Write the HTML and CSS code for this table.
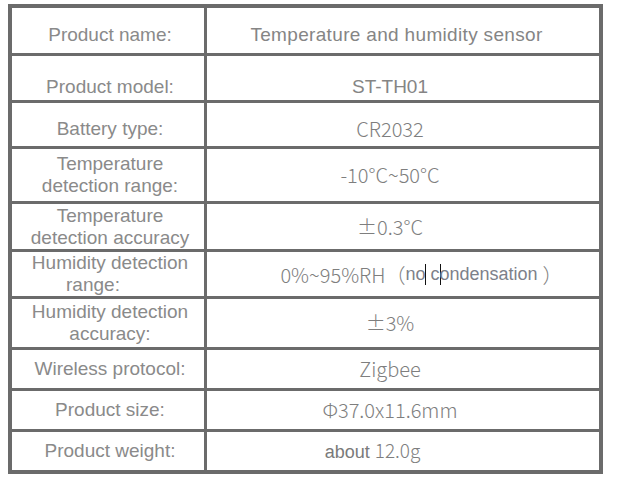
FILE: index.html
```html
<!DOCTYPE html>
<html>
<head>
<meta charset="utf-8">
<link rel="stylesheet" href="styles.css">
</head>
<body>
<div class="spec">
  <div class="row h45 low1">
    <div class="k">Product name:</div>
    <div class="v latin name">Temperature and humidity sensor</div>
  </div>
  <div class="row h44 low2">
    <div class="k">Product model:</div>
    <div class="v latin">ST-TH01</div>
  </div>
  <div class="row h43 low1">
    <div class="k">Battery type:</div>
    <div class="v">CR2032</div>
  </div>
  <div class="row h52">
    <div class="k"><span>Temperature<br>detection range:</span></div>
    <div class="v">-10°C~50°C</div>
  </div>
  <div class="row h45">
    <div class="k"><span>Temperature<br>detection accuracy</span></div>
    <div class="v">±0.3°C</div>
  </div>
  <div class="row h44">
    <div class="k"><span>Humidity detection<br><span class="offl">range:</span></span></div>
    <div class="v hum"><span>0%~95%RH（<span class="note">no<span class="caret"></span> c<span class="caret"></span>ondensation </span>）</span></div>
  </div>
  <div class="row h48">
    <div class="k"><span>Humidity detection<br>accuracy:</span></div>
    <div class="v">±3%</div>
  </div>
  <div class="row h38">
    <div class="k">Wireless protocol:</div>
    <div class="v">Zigbee</div>
  </div>
  <div class="row h38">
    <div class="k">Product size:</div>
    <div class="v">Φ37.0x11.6mm</div>
  </div>
  <div class="row h38">
    <div class="k">Product weight:</div>
    <div class="v weight"><span><span class="about">about </span>12.0g</span></div>
  </div>
</div>
</body>
</html>
```
FILE: styles.css
```css
html, body {
  background: #ffffff;
}
body {
  margin: 4px 0 0 8px;
}
.spec {
  width: 587px;
  border: 4px solid #6b6b6b;
  display: flex;
  flex-direction: column;
}
.row {
  display: flex;
  border-top: 3px solid #6b6b6b;
}
.row:first-child {
  border-top: 0;
}
.h45 { height: 45px; }
.h44 { height: 44px; }
.h43 { height: 43px; }
.h52 { height: 52px; }
.h48 { height: 48px; }
.h38 { height: 38px; }

.k {
  width: 195px;
  flex: none;
  border-right: 3px solid #6b6b6b;
  display: flex;
  align-items: center;
  justify-content: center;
  text-align: center;
  padding-left: 4px;
  box-sizing: border-box;
  font-family: "Liberation Sans", Arial, sans-serif;
  font-size: 19px;
  line-height: 22px;
  color: #8a8a8a;
}
.v {
  flex: 1;
  display: flex;
  align-items: center;
  justify-content: center;
  padding-right: 26px;
  font-family: "Noto Sans CJK SC", "Noto Sans", sans-serif;
  font-weight: 300;
  font-size: 20px;
  line-height: 22px;
  color: #7e7e7e;
  white-space: pre;
}
.latin {
  font-family: "Liberation Sans", Arial, sans-serif;
  font-weight: 400;
  font-size: 19px;
  color: #858585;
}
.name {
  padding-right: 13px;
  letter-spacing: 0.33px;
}
.low1 > div { padding-top: 8px; }
.low2 > div { padding-top: 17px; }
.offl {
  margin-right: 34px;
}
.hum {
  padding-right: 0;
  padding-left: 37px;
}
.note {
  font-family: "Liberation Sans", Arial, sans-serif;
  font-weight: 400;
  font-size: 18px;
  color: #7d818a;
  vertical-align: 3px;
}
.caret {
  display: inline-block;
  width: 1px;
  height: 21px;
  margin-right: -1px;
  background: #111;
  vertical-align: -5px;
}
.weight {
  padding-right: 61px;
  font-size: 19px;
}
.about {
  font-family: "Liberation Sans", Arial, sans-serif;
  font-weight: 400;
  font-size: 18px;
  color: #7a7a7a;
}
```
